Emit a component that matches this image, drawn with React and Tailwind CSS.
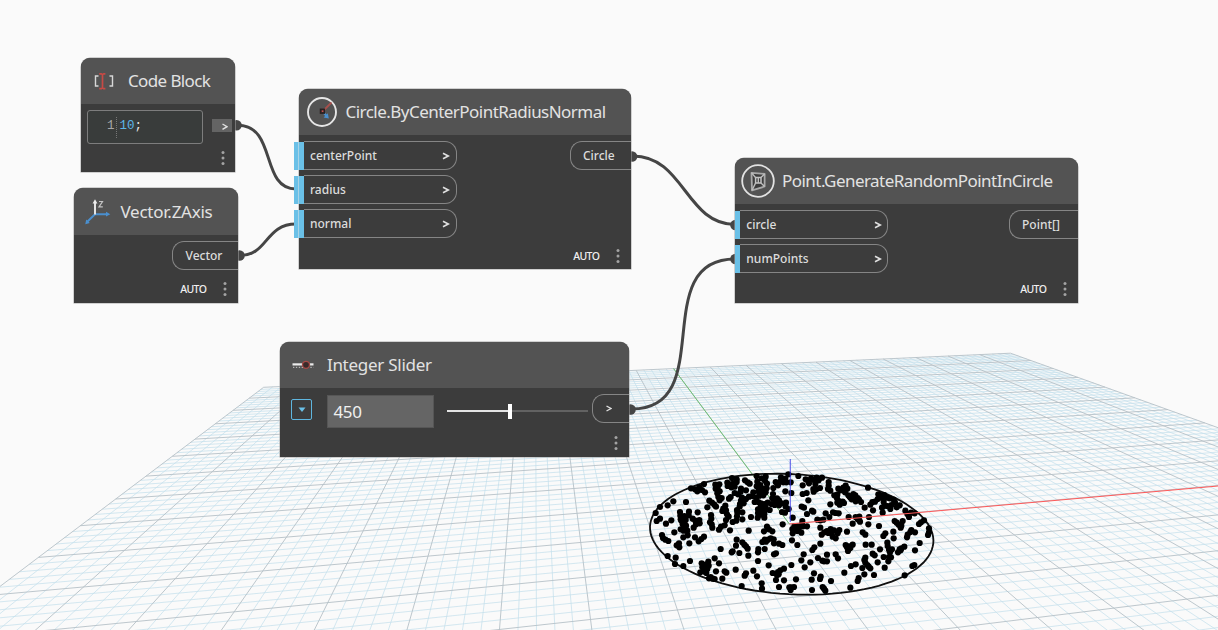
import React from "react";

/* ---------- 3D background preview ---------- */

// Ground plane to screen projection; one unit is one major grid cell.
function project(X, Y) {
  const w = 0.01792 * X + 0.08338 * Y + 1;
  return [
    (79.9 * X + 44.6 * Y + 789.2) / w,
    (3.503 * X + 15.21 * Y + 523.8) / w,
  ];
}

const fmt = ([x, y]) => x.toFixed(1) + " " + y.toFixed(1);
const segment = (a, b) => "M" + fmt(project(...a)) + "L" + fmt(project(...b));

function gridPath(major) {
  let d = "";
  for (let i = -50; i <= 50; i++) {
    if ((i % 5 === 0) !== major) continue;
    d += segment([i / 5, -6], [i / 5, 10]);
    if (i >= -30) d += segment([-10, i / 5], [10, i / 5]);
  }
  return d;
}

const minorGrid = gridPath(false);
const majorGrid = gridPath(true);

const circlePath =
  "M" +
  Array.from({ length: 120 }, (_, i) => {
    const t = (i / 120) * Math.PI * 2;
    return fmt(project(2.02 * Math.cos(t), 2.02 * Math.sin(t)));
  }).join("L") +
  "Z";

// Sample positions in thirds of a pixel, for the left and right half of the disc.
const leftPoints = [
  [445,73],[350,78],[276,84],[290,88],[192,102],[153,115],[165,118],[178,112],[186,120],[195,127],[172,124],
  [226,104],[238,103],[233,113],[227,116],[239,124],[232,130],[262,98],[270,103],[281,100],[290,96],[284,110],
  [274,112],[263,108],[315,91],[323,97],[329,101],[303,116],[302,125],[284,129],[294,133],[272,141],[267,146],
  [245,144],[235,141],[239,151],[208,152],[216,158],[223,164],[202,172],[228,170],[138,156],[100,154],[83,166],
  [60,171],[47,189],[50,213],[60,206],[78,221],[94,211],[120,186],[121,197],[133,198],[147,185],[146,196],
  [173,187],[124,212],[131,218],[122,208],[137,210],[128,223],[138,227],[122,238],[131,242],[142,242],[136,232],
  [158,206],[166,212],[178,210],[179,220],[168,223],[161,233],[103,247],[130,262],[148,280],[143,256],
  [66,255],[69,264],[76,269],[85,273],[110,286],[117,280],[118,292],[165,262],[176,274],[184,267],[192,260],
  [213,195],[214,206],[210,217],[215,223],[217,233],[237,239],[243,230],[254,226],[270,241],[250,176],[256,167],
  [247,183],[258,181],[261,193],[266,200],[258,210],[278,216],[289,212],[307,208],[291,199],[292,188],[307,187],
  [291,180],[299,170],[300,162],[311,160],[303,152],[306,143],[318,147],[318,121],[327,140],[340,127],[333,201],
  [337,138],[365,85],[377,80],[352,95],[375,93],[381,101],[350,109],[361,105],[362,116],[371,116],[380,115],
  [355,124],[366,126],[377,127],[349,143],[358,137],[370,136],[344,156],[355,156],[363,160],[373,162],[383,158],
  [394,162],[404,165],[413,159],[399,132],[397,145],[405,150],[411,145],[417,151],[407,96],[423,82],[422,94],
  [436,86],[439,97],[430,97],[400,114],[414,106],[436,124],[438,158],[425,160],[437,170],[426,186],[435,188],
  [417,166],[389,180],[377,173],[374,183],[362,170],[365,181],[354,189],[353,203],[361,194],[373,193],[373,203],
  [354,178],[428,223],[446,177],[326,242],[381,230],[387,238],[372,244],[397,244],[367,276],[374,269],[384,269],
  [392,265],[378,275],[401,268],[402,280],[417,281],[427,285],[374,297],[355,297],[354,307],[402,313],[408,310],
  [290,269],[288,287],[307,277],[313,284],[318,289],[323,296],[325,317],[298,309],[278,304],[275,307],[242,297],
  [224,325],[237,340],[205,335],[199,343],[185,340],[187,352],[206,347],[202,357],[195,365],[181,367],[199,369],
  [150,333],[107,323],[83,318],[105,342],[130,348],[228,364],[254,364],[259,368],[247,386],[224,387],[212,381],
  [207,385],[218,386],[287,359],[340,362],[318,370],[314,377],[351,379],[354,333],[386,346],[305,408],[365,400],
  [366,416],[432,356],[421,361],[414,366],[398,369],[411,375],[408,390],[432,391],[417,411],[416,373],[448,412],
];
const rightPoints = [
  [25,78],[2,97],[4,129],[38,106],[38,132],[50,129],[47,88],[55,94],[63,86],[57,100],[72,90],[80,83],[86,91],
  [96,83],[76,102],[70,117],[71,125],[79,118],[90,114],[55,151],[35,170],[42,173],[51,192],[66,182],[70,185],
  [116,96],[116,107],[114,117],[121,122],[145,116],[152,121],[160,113],[167,107],[172,116],[165,127],[133,136],
  [142,134],[141,145],[147,153],[149,164],[158,155],[162,159],[142,158],[175,136],[182,143],[190,132],[185,148],
  [195,147],[203,144],[196,136],[207,149],[213,156],[197,154],[179,140],[121,163],[107,190],[118,201],[129,187],
  [137,189],[146,190],[234,113],[224,173],[247,156],[241,164],[249,181],[255,155],[263,147],[265,133],[272,136],
  [275,143],[283,135],[290,143],[299,145],[311,149],[281,156],[284,167],[276,173],[278,188],[292,168],[301,177],
  [304,165],[320,172],[329,166],[315,157],[346,182],[352,192],[363,188],[374,190],[357,201],[387,222],[393,217],
  [402,211],[417,235],[417,247],[414,255],[389,279],[375,301],[373,345],[367,348],[344,376],[314,213],[320,218],
  [338,213],[326,224],[334,227],[332,233],[364,240],[361,246],[375,247],[353,254],[351,262],[310,245],[311,265],
  [286,250],[280,258],[267,228],[235,223],[237,201],[208,200],[197,201],[210,215],[203,208],[176,201],[188,221],
  [171,245],[218,247],[226,254],[8,203],[37,213],[36,223],[82,209],[91,211],[100,209],[13,228],[23,228],[7,237],
  [16,238],[27,234],[39,229],[51,229],[34,248],[22,243],[8,250],[91,233],[95,254],[103,247],[111,243],[122,237],
  [115,249],[125,249],[132,241],[148,240],[143,250],[137,265],[128,260],[6,271],[22,285],[91,281],[73,292],
  [67,300],[41,313],[34,331],[61,337],[44,352],[4,345],[84,324],[97,332],[111,314],[111,334],[137,313],[144,325],
  [102,334],[167,285],[177,289],[188,284],[171,292],[181,294],[174,303],[227,284],[245,284],[292,278],[293,288],
  [270,298],[297,299],[306,298],[300,307],[248,311],[254,316],[281,321],[297,321],[303,322],[295,334],[324,307],
  [329,298],[334,295],[343,290],[332,301],[226,323],[223,330],[226,338],[232,345],[236,350],[241,355],[217,354],
  [197,343],[183,348],[263,337],[284,353],[223,373],[252,375],[206,384],[203,393],[163,368],[72,370],[18,388],
  [65,389],[92,380],[90,387],[123,393],[181,413],[98,411],[102,416],[106,422],[66,420],[12,411],[2,420],[3,412],
];

function Preview() {
  return (
    <svg className="absolute inset-0" width="1218" height="630" viewBox="0 0 1218 630">
      <path d={minorGrid} fill="none" stroke="#c3dfeb" strokeWidth="0.8" opacity="0.9" />
      <path d={majorGrid} fill="none" stroke="#b6c1c7" strokeWidth="0.9" />
      <path d={segment([0, 0], [0, 10])} stroke="#6fbf73" strokeWidth="1" />
      <path d={circlePath} fill="none" stroke="#101010" strokeWidth="1.8" />
      {leftPoints.map(([x, y], i) => (
        <circle key={i} cx={640 + x / 3} cy={450 + y / 3} r="3.1" />
      ))}
      {rightPoints.map(([x, y], i) => (
        <circle key={i} cx={790 + x / 3} cy={450 + y / 3} r="3.1" />
      ))}
      <path d="M789.5 524L1218 486" stroke="#ff5a5a" strokeWidth="1" />
      <path d="M790.3 459V522" stroke="#3a3ae6" strokeWidth="1.1" opacity="0.8" />
    </svg>
  );
}

function Wires() {
  return (
    <svg className="absolute inset-0" width="1218" height="630" viewBox="0 0 1218 630">
      <g fill="none" stroke="#454545" strokeWidth="3">
        <path d="M238 125.3C277 125.3 260 189 296 189" />
        <path d="M240 255.5C268 255.5 265 224 296 224" />
        <path d="M633 156C684 156 686 224.5 735 224.5" />
        <path d="M632 409C719 409 647 259 735 259" />
      </g>
      <g fill="#454545">
        <circle cx="236.5" cy="125.3" r="5.3" />
        <circle cx="239.5" cy="255.5" r="5.3" />
        <circle cx="632" cy="156.5" r="5.3" />
        <circle cx="630.5" cy="409.5" r="5.3" />
        <circle cx="735.5" cy="225" r="5.3" />
        <circle cx="735.5" cy="259" r="5.3" />
      </g>
    </svg>
  );
}

/* ---------- Node building blocks ---------- */

function Node({ className, header, children }) {
  return (
    <section
      className={
        "absolute flex flex-col rounded-t-[9px] bg-[#3c3c3c] text-[#dcdcdc] shadow-[0_0_0_0.5px_#a5a5a5] " + className
      }
    >
      <header className="flex h-[46.5px] shrink-0 items-center rounded-t-[9px] bg-[#535353]">{header}</header>
      {children}
    </section>
  );
}

function Title({ className, children }) {
  return <h2 className={"whitespace-nowrap text-[17px] leading-6 text-[#e2e2e2] " + className}>{children}</h2>;
}

function Chevron() {
  return (
    <svg width="8" height="8" viewBox="0 0 8 8" className="shrink-0">
      <path d="M1 1.2L6.3 4L1 6.8" fill="none" stroke="#e0e0e0" strokeWidth="1.6" />
    </svg>
  );
}

function InPort({ label, outer }) {
  return (
    <div className={"flex h-[29px] " + (outer ? "-ml-[5px]" : "")}>
      {outer && <i className="my-[0.5px] w-[4.5px] border-r border-[#a9d3e6] bg-[#6ac0e7]" />}
      <i className="my-[0.5px] w-[5px] bg-[#6ac0e7]" />
      <div className="flex w-[153px] items-center justify-between rounded-r-[12px] border border-l-0 border-[#858585] pl-[6.5px] pr-[5.5px] text-[12px] font-medium leading-4">
        <span>{label}</span>
        <Chevron />
      </div>
    </div>
  );
}

function OutPort({ className, children }) {
  return (
    <div
      className={
        "flex h-[29px] items-center rounded-l-[12px] border border-r-0 border-[#858585] text-[12px] font-medium leading-4 " +
        className
      }
    >
      {children}
    </div>
  );
}

function Dots() {
  return (
    <svg width="4" height="16" viewBox="0 0 4 16" fill="#a3a3a3">
      <circle cx="2" cy="2.4" r="1.5" />
      <circle cx="2" cy="8" r="1.5" />
      <circle cx="2" cy="13.6" r="1.5" />
    </svg>
  );
}

function Footer({ className, auto }) {
  return (
    <footer className={"mt-auto flex items-center justify-end gap-[17px] " + className}>
      {auto && (
        <span className="text-[10.5px] font-medium leading-4 tracking-[-0.6px] text-[#f0f0f0]">AUTO</span>
      )}
      <Dots />
    </footer>
  );
}

/* ---------- Icons ---------- */

function CodeIcon() {
  return (
    <svg width="22" height="18" viewBox="0 0 22 18" fill="none">
      <path d="M5.5 4H2.5V14H5.5M16.5 4H19.5V14H16.5" stroke="#d8d8d8" strokeWidth="1.4" />
      <path d="M6.2 1.8H8.3L9.5 2.6L10.7 1.8H12.4M9.5 2V16M6.2 16.6H8.3L9.5 15.8L10.7 16.6H12.4" stroke="#c64a45" strokeWidth="1.7" />
    </svg>
  );
}

function AxisIcon() {
  return (
    <svg width="28" height="28" viewBox="0 0 28 28" fill="none">
      <path d="M11 16.2H23M11 16.2L3 24" stroke="#4a8fce" strokeWidth="1.9" />
      <path d="M22 13.8L26.3 16.2L22 18.6ZM1.3 26.2L2.2 21.4L5.8 25Z" fill="#4a8fce" />
      <path d="M11 16.5V3" stroke="#ececec" strokeWidth="1.9" />
      <path d="M8.6 5.4L11 1.2L13.4 5.4Z" fill="#ececec" />
      <path d="M15 3.5H18.5L15 8.8H18.8" stroke="#c4c4c4" strokeWidth="1.2" />
    </svg>
  );
}

function CircleIcon() {
  return (
    <svg width="30" height="30" viewBox="0 0 30 30" fill="none">
      <circle cx="15" cy="15" r="14" stroke="#e6e6e6" strokeWidth="1.9" />
      <path d="M16 14L24.5 5.5" stroke="#a8504d" strokeWidth="1.8" />
      <path d="M16 15L20 19.5" stroke="#4a8fce" strokeWidth="2" />
      <path d="M21.8 21.6L16.6 20.4L20.8 16.2Z" fill="#4a8fce" />
      <rect x="13.4" y="12.2" width="4" height="4" fill="#3a2c2c" stroke="#2a1f1f" strokeWidth="1.3" />
      <rect x="14.8" y="13.4" width="1.6" height="1.6" fill="#c9524e" />
    </svg>
  );
}

function PackageIcon() {
  return (
    <svg width="34" height="34" viewBox="0 0 34 34" fill="none">
      <circle cx="17" cy="17" r="15.8" stroke="#e2e2e2" strokeWidth="1.8" />
      <path d="M10.5 8.8L23.6 10V22.5L11 26.4Z" fill="#3c3c3c" stroke="#a9a9a9" strokeWidth="1.8" strokeLinejoin="round" />
      <path d="M14.6 13.6H20V19H14.6Z" stroke="#c4c4c4" strokeWidth="1.5" />
      <path d="M10.5 8.8L14.6 13.6M23.6 10L20 13.6M23.6 22.5L20 19M11 26.4L14.6 19M17.3 13.6V19" stroke="#bdbdbd" strokeWidth="1.4" />
    </svg>
  );
}

function SliderIcon() {
  return (
    <svg width="22" height="10" viewBox="0 0 22 10" fill="none">
      <path d="M0.5 4.4H21.5" stroke="#ececec" strokeWidth="2.2" />
      <path d="M1 7.3H21.5" stroke="#b5b5b5" strokeWidth="1.3" strokeDasharray="1.3 1.6" />
      <circle cx="14" cy="4.8" r="3.5" fill="#3a2a2a" stroke="#a84a46" strokeWidth="1.3" />
    </svg>
  );
}

/* ---------- Nodes ---------- */

function CodeBlockNode() {
  return (
    <Node
      className="left-[81px] top-[57.5px] h-[114px] w-[154.4px]"
      header={
        <div className="flex items-center gap-[13px] pl-3">
          <CodeIcon />
          <Title className="tracking-[-0.62px]">Code Block</Title>
        </div>
      }
    >
      <div className="flex items-start pl-[6px] pt-[6px]">
        <div className="flex h-[34px] w-[116px] items-center rounded-[3px] border border-[#7d7d7d] bg-[#393c3b] pb-[2px] pl-[19px] font-['Liberation_Mono',monospace] text-[12.5px] leading-4">
          <span className="text-[#a8a8a8]">1</span>
          <i className="ml-[1px] mr-[3px] h-[21px] translate-y-px border-l border-dotted border-[#777]" />
          <span className="text-[#5db5e8]">
            10<span className="text-[#e6e6e6]">;</span>
          </span>
        </div>
        <div className="ml-[8.5px] mt-[9px] flex h-[13px] w-[20.5px] items-center justify-end bg-[#646464] pr-[4px] pt-px">
          <svg width="6" height="7" viewBox="0 0 6 7">
            <path d="M0.5 1L5 3.7L0.5 6.4" fill="none" stroke="#e0e0e0" strokeWidth="1.4" />
          </svg>
        </div>
      </div>
      <Footer className="pb-[5.5px] pr-[10.7px]" />
    </Node>
  );
}

function VectorNode() {
  return (
    <Node
      className="left-[74px] top-[188px] h-[115px] w-[164px]"
      header={
        <div className="flex items-center gap-[8.5px] pl-[10px] pt-[0.5px]">
          <AxisIcon />
          <Title className="tracking-[-0.25px]">Vector.ZAxis</Title>
        </div>
      }
    >
      <div className="flex justify-end pt-[6.5px]">
        <OutPort className="w-[66px] pl-[12.5px]">Vector</OutPort>
      </div>
      <Footer auto className="pb-[6px] pr-[10.7px]" />
    </Node>
  );
}

function CircleNode() {
  return (
    <Node
      className="left-[299px] top-[88.5px] h-[180.8px] w-[332px]"
      header={
        <div className="flex items-center gap-[8.5px] pl-[8px] pt-[0.5px]">
          <CircleIcon />
          <Title className="tracking-[-0.53px]">Circle.ByCenterPointRadiusNormal</Title>
        </div>
      }
    >
      <div className="flex justify-between pt-[6px]">
        <div className="flex flex-col gap-[5px]">
          <InPort outer label="centerPoint" />
          <InPort outer label="radius" />
          <InPort outer label="normal" />
        </div>
        <OutPort className="w-[61px] pl-3">Circle</OutPort>
      </div>
      <Footer auto className="pb-[5.5px] pr-[10.7px]" />
    </Node>
  );
}

function PointNode() {
  return (
    <Node
      className="left-[735px] top-[157.5px] h-[145.3px] w-[343px]"
      header={
        <div className="flex items-center gap-[7px] pl-[6px]">
          <PackageIcon />
          <Title className="tracking-[-0.54px]">Point.GenerateRandomPointInCircle</Title>
        </div>
      }
    >
      <div className="flex justify-between pt-[6px]">
        <div className="flex w-[153px] flex-col gap-[5px]">
          <InPort label="circle" />
          <InPort label="numPoints" />
        </div>
        <OutPort className="w-[69px] pl-3">Point[]</OutPort>
      </div>
      <Footer auto className="pb-[6px] pr-[10.7px]" />
    </Node>
  );
}

function SliderNode() {
  return (
    <Node
      className="left-[280.4px] top-[341.5px] h-[115px] w-[349px]"
      header={
        <div className="flex items-center gap-[12.5px] pl-[12px]">
          <SliderIcon />
          <Title className="tracking-[-0.27px]">Integer Slider</Title>
        </div>
      }
    >
      <div className="flex items-start pl-[11px] pt-[6px]">
        <button className="mt-[5px] flex size-[21px] items-center justify-center rounded-[2px] border-[1.5px] border-[#5fb6df]">
          <svg width="8" height="6" viewBox="0 0 8 6">
            <path d="M0.5 0.5H7.5L4 5Z" fill="#6ac0e7" />
          </svg>
        </button>
        <div className="ml-[14.5px] mt-[0.5px] flex h-[33px] w-[107.5px] items-center border border-[#565656] bg-[#656565] pl-[5.5px] pt-px text-[17px] leading-6 tracking-[-0.3px] text-[#f0f0f0]">
          450
        </div>
        <div className="ml-[12.5px] mt-[9.5px] flex h-[15px] w-[141px] items-center">
          <i className="h-[2px] w-[61.5px] bg-[#e4e4e4]" />
          <i className="h-[15px] w-[4px] bg-white" />
          <i className="h-[1.5px] flex-1 bg-[#626262]" />
        </div>
        <OutPort className="ml-[4px] w-[37.5px] pl-[13.5px]">
          <svg width="6" height="7" viewBox="0 0 6 7">
            <path d="M0.5 1L5 3.5L0.5 6" fill="none" stroke="#e0e0e0" strokeWidth="1.4" />
          </svg>
        </OutPort>
      </div>
      <Footer className="pb-[5.5px] pr-[11px]" />
    </Node>
  );
}

export default function App() {
  return (
    <main className="relative h-[630px] w-[1218px] overflow-hidden bg-[#fafafa] font-['Noto_Sans','Open_Sans',sans-serif]">
      <Preview />
      <Wires />
      <CodeBlockNode />
      <VectorNode />
      <CircleNode />
      <PointNode />
      <SliderNode />
    </main>
  );
}
